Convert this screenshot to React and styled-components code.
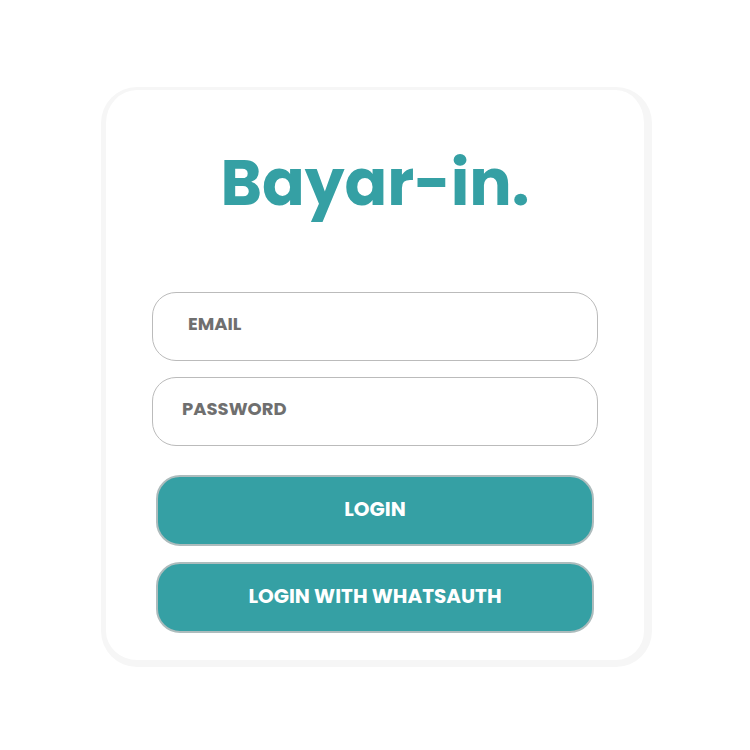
import React from 'react';
import styled, { createGlobalStyle } from 'styled-components';

const GlobalStyle = createGlobalStyle`
  * { box-sizing: border-box; }
  body {
    margin: 0;
    background: #fff;
    font-family: Poppins, Inter, "Open Sans", sans-serif;
  }
`;

const Page = styled.main`
  min-height: 100vh;
  display: flex;
  align-items: center;
  justify-content: center;
  padding: 28px 24px 24px 27px;
`;

const Card = styled.form`
  width: 100%;
  max-width: 551px;
  padding: 53px 46px 27px;
  background: #fff;
  border: solid #f6f6f6;
  border-width: 3px 8px 7px 5px;
  border-radius: 36px;
`;

const Brand = styled.h1`
  margin: 0 0 69px;
  text-align: center;
  color: #35a0a4;
  font-size: 63px;
  line-height: 80px;
  font-weight: 700;
`;

const Fields = styled.div`
  display: grid;
  gap: 16px;
  margin-bottom: 29px;
`;

const Field = styled.input`
  width: 100%;
  height: 69px;
  padding: 0 ${(p) => p.$inset}px 6px;
  border: 1px solid #bbb;
  border-radius: 24px;
  background: #fff;
  color: #6b6b6b;
  font: 700 18px/24px Poppins, Inter, "Open Sans", sans-serif;
  &::placeholder { color: #6f6f6f; opacity: 1; }
`;

const Actions = styled.div`
  display: grid;
  gap: 16px;
  padding: 0 4px;
`;

const Action = styled.button`
  height: 71px;
  padding: 0 16px 4px;
  border: 2px solid #adbcbd;
  border-radius: 24px;
  background: #35a0a4;
  color: #fff;
  font: 700 20px/28px Poppins, Inter, "Open Sans", sans-serif;
  cursor: pointer;
`;

export default function App() {
  return (
    <>
      <GlobalStyle />
      <Page>
        <Card onSubmit={(e) => e.preventDefault()}>
          <Brand>Bayar-in.</Brand>
          <Fields>
            <Field type="email" aria-label="Email" placeholder="EMAIL" $inset={35} />
            <Field type="password" aria-label="Password" placeholder="PASSWORD" $inset={29} />
          </Fields>
          <Actions>
            <Action type="submit">LOGIN</Action>
            <Action type="button">LOGIN WITH WHATSAUTH</Action>
          </Actions>
        </Card>
      </Page>
    </>
  );
}
